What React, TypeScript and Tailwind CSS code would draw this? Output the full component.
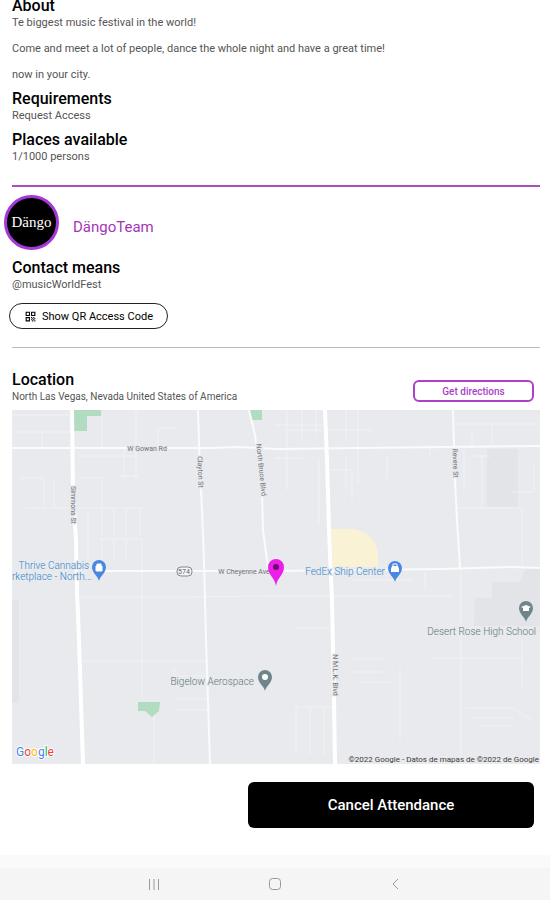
import type { ReactNode } from "react";
import { MdQrCode } from "react-icons/md";

const parks = [
  "M61 0H89V6H75V21H61Z",
  "M238 0H250V10H238Z",
  "M126 292H148L147 301L140 307L133 301H126Z",
];

const mainRoads = [
  "M0 38H200L226 37L264 39L528 36",
  "M84 161H262L348 160L428 159L500 157L528 158",
  "M186 0L188 60L190 100L192 150L194 230L198 354",
  "M237 0L243 25L250 80L251 120L256 158",
  "M441 0L443 70L445 110L448 158",
];

const highways = [
  "M60 0L61 80L64 130L65 180L67 230L71 354",
  "M313 0L315 50L317 120L320 190L322 290L323 354",
];

const streets = [
  "M0 5H60M0 22H60M30 22V38M66 46H126M90 6V38M124 0V68M146 18V38M146 18H166",
  "M8 68H32M32 68V96M42 68V98M14 98H60M66 68H90M90 68V96M108 66H126M112 40V68",
  "M66 98H130M90 98V126M102 98V126M114 98V126M128 98V126M88 129H130M90 129V160M102 129V152M114 129V152M130 129V290M76 98V150",
  "M70 187H180L250 186H440M72 251H194M162 258V266H194M164 289H196M142 290V354M165 300H196",
  "M275 0V80M275 20H310M290 0V30M304 0V24M263 15H313M263 48H290M346 0V75M334 0V30M313 20H360M334 46V78M375 46V68M307 48V115M318 60H340V90",
  "M418 46V38M480 14V34M460 20V36M440 14H528M452 40V78M470 46V98M444 98H510M462 46H478M510 98V156M522 54V82H500",
  "M449 158V354M413 162V180M340 170H400M284 218H318M340 249H370M422 248H510M388 258V330M342 262H370M346 272H380",
  "M284 297H320M284 297V345M298 297V345M312 297V345M454 298H500L520 310M462 308H502M468 316H500M510 230V280",
];

const streetLabels = [
  { text: "W Gowan Rd", x: 135, y: 41, angle: 0 },
  { text: "W Cheyenne Ave", x: 232, y: 164, angle: 0 },
  { text: "Simmons St", x: 59, y: 95, angle: 90 },
  { text: "Clayton St", x: 186, y: 62, angle: 88 },
  { text: "North Bruce Blvd", x: 247, y: 60, angle: 84 },
  { text: "Revere St", x: 441, y: 53, angle: 88 },
  { text: "N M.L.K. Blvd", x: 321, y: 265, angle: 90 },
];

const Pin: React.FC<{ x: number; y: number; color: string; children: ReactNode }> = ({
  x,
  y,
  color,
  children,
}) => (
  <g transform={`translate(${x} ${y})`}>
    <path
      d="M0 0C-1 -5 -7 -8 -7 -14A7 7 0 0 1 7 -14C7 -8 1 -5 0 0Z"
      fill={color}
    />
    {children}
  </g>
);

const LocationMap: React.FC = () => (
  <svg
    viewBox="0 0 528 354"
    role="img"
    aria-label="Map of North Las Vegas"
    className="block w-full bg-[#e8eaed]"
  >
    <g fill="#e2e4e7">
      <rect x="475" y="39" width="31" height="58" rx="2" />
      <path d="M463 188H480V172H508L515 157H528V216H462Z" />
      <rect x="0" y="190" width="7" height="103" />
    </g>
    <path d="M319 119H340C354 120 366 130 366 146V157H321Z" fill="#f9f2d4" />

    <g fill="none" stroke="#f0f2f4" strokeWidth="1">
      {streets.map((d) => (
        <path key={d} d={d} />
      ))}
    </g>
    {parks.map((d) => (
      <path key={d} d={d} fill="#b1dcc0" />
    ))}
    <g fill="none" stroke="#fafbfc" strokeWidth="2">
      {mainRoads.map((d) => (
        <path key={d} d={d} />
      ))}
    </g>
    <g fill="none" stroke="#ffffff" strokeWidth="4">
      {highways.map((d) => (
        <path key={d} d={d} />
      ))}
    </g>

    <g
      className="text-[7px]"
      fill="#707477"
      stroke="#e8eaed"
      strokeWidth="2"
      paintOrder="stroke"
      textAnchor="middle"
    >
      {streetLabels.map(({ text, x, y, angle }) => (
        <text key={text} transform={`translate(${x} ${y}) rotate(${angle})`}>
          {text}
        </text>
      ))}
    </g>

    <rect x="165" y="157" width="15" height="9" rx="4" fill="#f5f6f7" stroke="#85898c" />
    <text x="172" y="164" textAnchor="middle" fill="#606468" className="text-[7px]">
      574
    </text>

    <g
      className="text-[10px] font-light"
      fill="#3585c8"
      stroke="#e8eaed"
      strokeWidth="2"
      paintOrder="stroke"
      textAnchor="end"
    >
      <text x="77" y="159">Thrive Cannabis</text>
      <text x="0" y="170" textAnchor="start">rketplace - North...</text>
      <text x="373" y="165">FedEx Ship Center</text>
      <g fill="#63757b">
        <text x="242" y="275">Bigelow Aerospace</text>
        <text x="524" y="225">Desert Rose High School</text>
      </g>
    </g>

    <Pin x={87} y={171} color="#4a87e2">
      <path d="M-3 -15H3V-10H-3ZM-2 -15V-17H2V-15" fill="#fff" stroke="#fff" />
    </Pin>
    <Pin x={383} y={172} color="#4a87e2">
      <path d="M-4 -13L-3 -16H3L4 -13V-10H-4Z" fill="#fff" />
      <path d="M-2 -16V-18H2V-16" fill="none" stroke="#fff" />
    </Pin>
    <Pin x={253} y={281} color="#6f858c">
      <circle cy="-14" r="3" fill="#fff" />
    </Pin>
    <Pin x={514} y={212} color="#6f858c">
      <path d="M-5 -15L0 -17L5 -15L3 -14V-11H-3V-14Z" fill="#fff" />
    </Pin>

    <path
      d="M264 176C263 168 256 165 256 157A8 8 0 0 1 272 157C272 165 265 168 264 176Z"
      fill="#ec1fe8"
    />
    <circle cx="264" cy="157" r="3" fill="#6d0d70" />

    <text x="4" y="346" className="text-[12px]" stroke="#fff" strokeWidth="2" paintOrder="stroke">
      <tspan fill="#4285f4">G</tspan>
      <tspan fill="#ea4335">o</tspan>
      <tspan fill="#fbbc05">o</tspan>
      <tspan fill="#4285f4">g</tspan>
      <tspan fill="#34a853">l</tspan>
      <tspan fill="#ea4335">e</tspan>
    </text>
    <text x="527" y="352" textAnchor="end" fill="#3c3c3c" className="text-[8px]">
      ©2022 Google - Datos de mapas de ©2022 de Google
    </text>
  </svg>
);

const Heading: React.FC<{ children: ReactNode }> = ({ children }) => (
  <h2 className="text-[16px] leading-5 font-medium text-black">{children}</h2>
);

const App: React.FC = () => {
  return (
    <div className="min-h-screen flex flex-col bg-white font-[Roboto,sans-serif] text-[11px] leading-[13px] text-[#555]">
      <main className="flex-1 pl-3 pr-[10px]">
        <section className="-mt-1">
          <Heading>About</Heading>
          <p>Te biggest music festival in the world!</p>
          <p className="mt-[13px]">
            Come and meet a lot of people, dance the whole night and have a great time!
          </p>
          <p className="mt-[13px]">now in your city.</p>
        </section>
        <section className="mt-2">
          <Heading>Requirements</Heading>
          <p>Request Access</p>
        </section>
        <section className="mt-2">
          <Heading>Places available</Heading>
          <p>1/1000 persons</p>
        </section>

        <hr className="mt-[22px] border-t-2 border-[#a94fb8]" />

        <div className="-ml-2 mt-2 flex items-center gap-[14px]">
          <div className="flex size-[55px] items-center justify-center rounded-full border-[3px] border-[#a438d8] bg-black font-['Liberation_Serif',serif] text-[15px] text-white">
            Dängo
          </div>
          <a href="#team" className="mt-2 text-[15px] leading-5 text-[#a436b4]">
            DängoTeam
          </a>
        </div>

        <section className="mt-2">
          <Heading>Contact means</Heading>
          <p>@musicWorldFest</p>
        </section>
        <button className="-ml-[3px] mt-3 flex h-[26px] w-[159px] items-center justify-center gap-[5px] rounded-full border border-[#222] text-[11px] text-black">
          <MdQrCode size={13} />
          Show QR Access Code
        </button>

        <hr className="mt-[18px] border-t border-[#bbb]" />

        <section className="mt-[22px]">
          <div className="flex items-start justify-between">
            <div>
              <Heading>Location</Heading>
              <p className="text-[10px]">North Las Vegas, Nevada United States of America</p>
            </div>
            <button className="mr-1.5 mt-[10px] h-[22px] w-[121px] rounded-md border-2 border-[#ac40c8] text-[10px] font-medium text-[#ac40c8]">
              Get directions
            </button>
          </div>
          <div className="mt-[7px]">
            <LocationMap />
          </div>
        </section>

        <div className="flex justify-end pr-1.5 pt-[18px] pb-[26px]">
          <button className="h-[46px] w-[286px] rounded-md bg-black text-[15px] font-medium text-white">
            Cancel Attendance
          </button>
        </div>
      </main>

      <footer className="border-t-[13px] border-[#fafafa] bg-[#f5f5f5]">
        <nav className="flex h-8 items-center justify-center gap-[107px] text-[#999]">
          <button aria-label="Recent apps">
            <svg viewBox="0 0 14 14" className="size-[14px]" stroke="currentColor">
              <path d="M2.5 2V13M7 2V13M11.5 2V13" />
            </svg>
          </button>
          <button aria-label="Home">
            <svg viewBox="0 0 14 14" className="size-[14px]" fill="none" stroke="currentColor">
              <rect x="1.5" y="1.5" width="11" height="11" rx="3" />
            </svg>
          </button>
          <button aria-label="Back">
            <svg viewBox="0 0 14 14" className="size-[14px]" fill="none" stroke="currentColor">
              <path d="M9 2L4 7L9 12" />
            </svg>
          </button>
        </nav>
      </footer>
    </div>
  );
};

export default App;
